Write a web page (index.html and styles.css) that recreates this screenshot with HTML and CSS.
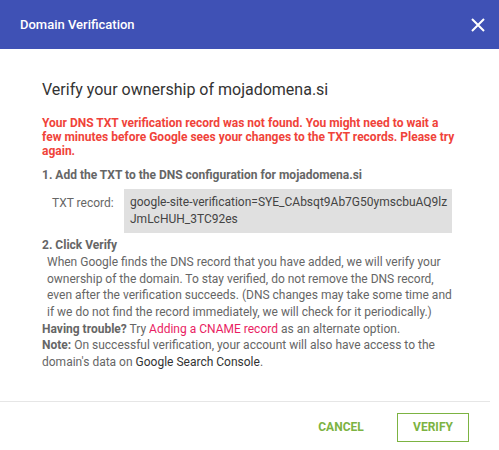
FILE: index.html
```
<!DOCTYPE html>
<html>
<head>
<meta charset="utf-8">
<link rel="stylesheet" href="styles.css">
</head>
<body>
<div class="dialog">
  <header class="bar">
    <span class="bar-title">Domain Verification</span>
    <svg class="close" width="14" height="14" viewBox="0 0 14 14"><path d="M1 1L13 13M13 1L1 13" stroke="#fff" stroke-width="2" fill="none"/></svg>
  </header>
  <main class="content">
    <h1 class="heading">Verify your ownership of mojadomena.si</h1>
    <p class="error">Your DNS TXT verification record was not found. You might need to wait a few minutes before Google sees your changes to the TXT records. Please try again.</p>
    <div class="step">1. Add the TXT to the DNS configuration for mojadomena.si</div>
    <div class="record">
      <span class="record-label">TXT record:</span>
      <div class="record-value">google-site-verification=SYE_CAbsqt9Ab7G50ymscbuAQ9lz<br>JmLcHUH_3TC92es</div>
    </div>
    <div class="step step2">2. Click Verify</div>
    <p class="desc">When Google finds the DNS record that you have added, we will verify your ownership of the domain. To stay verified, do not remove the DNS record, even after the verification succeeds. (DNS changes may take some time and if we do not find the record immediately, we will check for it periodically.)</p>
    <p class="note"><b>Having trouble?</b> Try <a class="link">Adding a CNAME record</a> as an alternate option.</p>
    <p class="note"><b>Note:</b> On successful verification, your account will also have access to the<br>domain's data on <span class="dark">Google Search Console</span>.</p>
  </main>
  <footer class="actions">
    <button class="btn">CANCEL</button>
    <button class="btn btn-outline">VERIFY</button>
  </footer>
</div>
</body>
</html>
```
FILE: styles.css
```
* { box-sizing: border-box; }
html, body { margin: 0; padding: 0; background: #fff; }
body { font-family: Roboto, "Noto Sans", sans-serif; width: 499px; height: 450px; overflow: hidden; }
.dialog { width: 490px; }
.bar {
  height: 49px; background: #3f51b5; display: flex; align-items: center;
  justify-content: space-between; padding: 0 14px 0 20px; width: 499px;
}
.bar-title { color: #fff; font-size: 13px; font-weight: 500; }
.close { display: block; }
.content { padding: 30px 0 0 42px; color: #666; font-size: 12px; }
.heading { margin: 0; font-size: 16px; font-weight: 400; color: #333; line-height: 22px; }
.error { margin: 15px 0 0; color: #f0433a; font-weight: 700; line-height: 14px; width: 416px; }
.step { font-weight: 700; color: #666; line-height: 16px; margin-top: 9px; }
.record { display: flex; align-items: flex-start; margin-top: 6px; }
.record-label { width: 82px; padding: 6px 0 0 10px; line-height: 16px; }
.record-value {
  background: #e0e0e0; color: #444; width: 328px; padding: 5px 6px; line-height: 17px;
  white-space: nowrap;
}
.step2 { margin-top: 4px; }
.desc { margin: 1px 0 0 5px; line-height: 16.67px; width: 410px; }
.note { margin: 0; line-height: 16.67px; width: 440px; }
.note b { font-weight: 700; }
.link { color: #e91e63; }
.dark { color: #333; }
.actions {
  margin-top: 30px; border-top: 1px solid #e6e6e6; display: flex; justify-content: flex-end;
  align-items: center; gap: 20px; padding: 11px 21px 0 0; width: 490px;
}
.btn {
  font-family: Roboto, sans-serif; font-size: 12px; font-weight: 700; color: #7cb342;
  background: none; border: 1px solid transparent; height: 29px; padding: 0; width: 72px;
}
.btn-outline { border-color: #7cb342; }
```
